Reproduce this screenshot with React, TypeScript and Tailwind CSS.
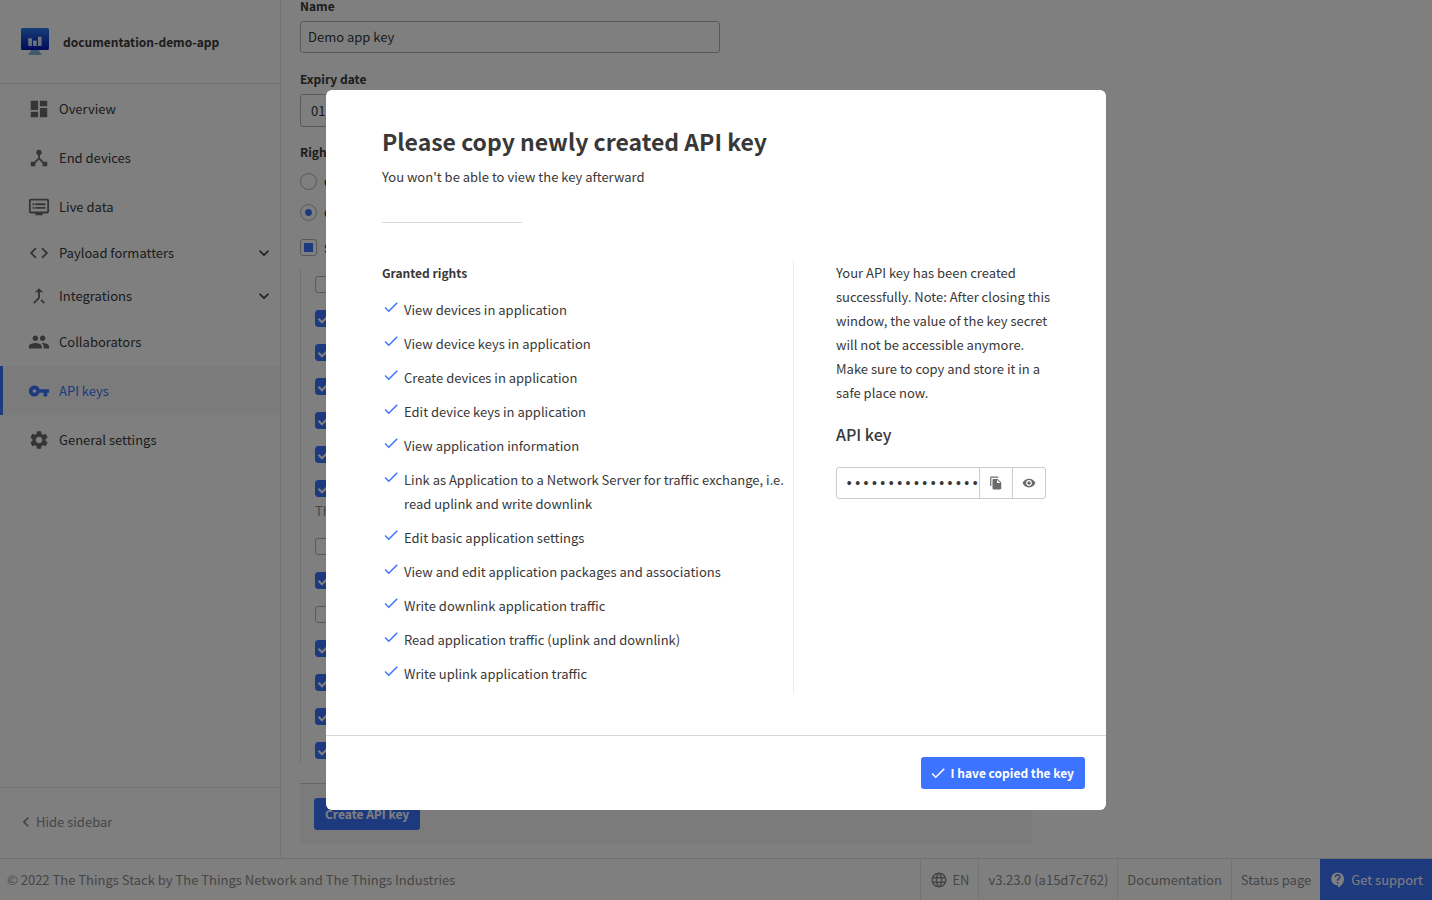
import React from 'react'
import type { IconType } from 'react-icons'
import {
  MdCallMerge,
  MdCheck,
  MdCode,
  MdContactSupport,
  MdDashboard,
  MdDeviceHub,
  MdDvr,
  MdExpandMore,
  MdFileCopy,
  MdKeyboardArrowLeft,
  MdLanguage,
  MdPeople,
  MdRemoveRedEye,
  MdSettings,
  MdVpnKey,
} from 'react-icons/md'

type NavEntry = { label: string; icon: IconType; active?: boolean; expandable?: boolean }

const navEntries: NavEntry[] = [
  { label: 'Overview', icon: MdDashboard },
  { label: 'End devices', icon: MdDeviceHub },
  { label: 'Live data', icon: MdDvr },
  { label: 'Payload formatters', icon: MdCode, expandable: true },
  { label: 'Integrations', icon: MdCallMerge, expandable: true },
  { label: 'Collaborators', icon: MdPeople },
  { label: 'API keys', icon: MdVpnKey, active: true },
  { label: 'General settings', icon: MdSettings },
]

const rights: { label: string; checked: boolean; note?: string }[] = [
  { label: 'Delete application', checked: false },
  { label: 'View devices in application', checked: true },
  { label: 'View device keys in application', checked: true },
  { label: 'Create devices in application', checked: true },
  { label: 'Edit device keys in application', checked: true },
  { label: 'View application information', checked: true },
  {
    label: 'Link as Application to a Network Server for traffic exchange',
    checked: true,
    note: 'This implicitly includes the rights to view application information',
  },
  { label: 'View and edit application API keys', checked: false },
  { label: 'Edit basic application settings', checked: true },
  { label: 'View and edit application collaborators', checked: false },
  { label: 'View and edit application packages and associations', checked: true },
  { label: 'Write downlink application traffic', checked: true },
  { label: 'Read application traffic (uplink and downlink)', checked: true },
  { label: 'Write uplink application traffic', checked: true },
]

const grantedRights = [
  'View devices in application',
  'View device keys in application',
  'Create devices in application',
  'Edit device keys in application',
  'View application information',
  'Link as Application to a Network Server for traffic exchange, i.e. read uplink and write downlink',
  'Edit basic application settings',
  'View and edit application packages and associations',
  'Write downlink application traffic',
  'Read application traffic (uplink and downlink)',
  'Write uplink application traffic',
]

function AppLogo() {
  return (
    <svg width="28" height="28" viewBox="0 0 28 28" aria-hidden="true">
      <defs>
        <linearGradient id="screen" x1="0" y1="0" x2="0" y2="1">
          <stop offset="0" stopColor="#2b7bf0" />
          <stop offset="1" stopColor="#0016b0" />
        </linearGradient>
        <linearGradient id="bars" x1="0" y1="0" x2="1" y2="1">
          <stop offset="0" stopColor="#ffffff" />
          <stop offset="1" stopColor="#a9c4f5" />
        </linearGradient>
      </defs>
      <path d="M10 22h8l1 3h.5a1 1 0 0 1 0 2h-11a1 1 0 0 1 0-2H9z" fill="#7fb2dc" />
      <rect width="28" height="22" rx="1.6" fill="url(#screen)" />
      <rect x="7.3" y="10.3" width="3.7" height="7.7" fill="url(#bars)" />
      <rect x="12.1" y="12.6" width="3.7" height="5.4" fill="url(#bars)" />
      <rect x="17" y="8.8" width="3.7" height="9.2" fill="url(#bars)" />
    </svg>
  )
}

function Sidebar() {
  return (
    <aside className="flex w-[281px] shrink-0 flex-col border-r border-[#e8e8e8]">
      <div className="flex h-21 items-center gap-3.5 border-b border-[#e0e0e0] pl-[21px]">
        <AppLogo />
        <span className="text-[12px] font-bold">documentation-demo-app</span>
      </div>
      <nav className="flex-1">
        <ul>
          {navEntries.map(({ label, icon: Icon, active, expandable }) => (
            <li key={label}>
              <a
                href="#"
                className={
                  active
                    ? 'flex h-[49px] items-center gap-[9px] border-l-3 border-[#3d74ff] bg-[#f7f7f7] pr-1.5 pl-[25px] text-[#3d74ff]'
                    : expandable
                      ? 'flex h-[43px] items-center gap-[9px] border-l-3 border-transparent pr-1.5 pl-[25px]'
                      : 'flex h-[49px] items-center gap-[9px] border-l-3 border-transparent pr-1.5 pl-[25px]'
                }
              >
                <Icon size={22} className={active ? '' : 'text-[#6b6b6b]'} />
                <span className="flex-1">{label}</span>
                {expandable && <MdExpandMore size={20} />}
              </a>
            </li>
          ))}
        </ul>
      </nav>
      <button
        type="button"
        className="flex h-[71px] items-center border-t border-[#e8e8e8] pb-0.5 pl-4 text-[#8c8c8c]"
      >
        <MdKeyboardArrowLeft size={20} />
        Hide sidebar
      </button>
    </aside>
  )
}

function RightCheckbox({ label, checked }: { label: string; checked: boolean }) {
  return (
    <label className="flex items-center gap-2">
      <span className="grid">
        <input
          type="checkbox"
          defaultChecked={checked}
          className="col-start-1 row-start-1 size-[17px] appearance-none rounded-[3px] border border-[#b2b2b2] checked:border-[#3d74ff] checked:bg-[#3d74ff]"
        />
        {checked && (
          <svg
            viewBox="0 0 17 17"
            className="pointer-events-none col-start-1 row-start-1 size-[17px]"
            fill="none"
            stroke="white"
            strokeWidth="2"
            aria-hidden="true"
          >
            <path d="M3.5 8.8l3.5 3.5 7-7" />
          </svg>
        )}
      </span>
      <span className="leading-[17px]">{label}</span>
    </label>
  )
}

function KeyForm() {
  return (
    <main className="flex-1 overflow-hidden pl-[19px]">
      <form className="flex max-w-[732px] flex-col">
        <label htmlFor="key-name" className="mb-[9px] text-[12px] leading-3 font-bold">
          Name
        </label>
        <input
          id="key-name"
          defaultValue="Demo app key"
          className="h-8 w-[420px] rounded-[3px] border border-[#b2b2b2] px-[7px] pb-0.5"
        />
        <label htmlFor="key-expiry" className="mt-5 mb-[9px] text-[12px] leading-3 font-bold">
          Expiry date
        </label>
        <input
          id="key-expiry"
          defaultValue="01/01/2023"
          className="h-[33px] w-[180px] rounded-[3px] border border-[#b2b2b2] px-2.5"
        />
        <fieldset className="mt-4 flex flex-col">
          <legend className="mb-[13px] text-[12px] leading-[17px] font-bold">Rights</legend>
          <label className="mb-3.5 flex items-center gap-[7px] text-[12px] leading-[17px] font-bold">
            <input
              type="radio"
              name="grant"
              className="size-[17px] appearance-none rounded-full border border-[#b2b2b2]"
            />
            Grant all current and future rights
          </label>
          <label className="mb-[18px] flex items-center gap-[7px] text-[12px] leading-[17px] font-bold">
            <input
              type="radio"
              name="grant"
              defaultChecked
              className="size-[17px] appearance-none rounded-full border border-[#b2b2b2] bg-[radial-gradient(circle,#3d74ff_3px,transparent_4px)]"
            />
            Grant individual rights
          </label>
          <label className="mb-3.5 flex items-center gap-[7px] text-[12px] leading-[17px] font-bold">
            <input
              type="checkbox"
              className="size-[17px] appearance-none rounded-[3px] border border-[#b2b2b2] bg-[#3d74ff] bg-clip-content p-[3px]"
            />
            Select all
          </label>
          <ul className="flex flex-col gap-[17px] border-l border-[#e0e0e0] pt-1.5 pb-[3px] pl-3.5">
            {rights.map(({ label, checked, note }) => (
              <li key={label}>
                <RightCheckbox label={label} checked={checked} />
                {note && <p className="mt-1 leading-5 text-[#8c8c8c]">{note}</p>}
              </li>
            ))}
          </ul>
        </fieldset>
        <div className="mt-[21px] border-t border-[#cccccc] bg-[#f7f7f7] p-3.5">
          <button
            type="button"
            className="h-8 rounded-[3px] bg-[#3d74ff] px-[11px] text-[12px] font-bold text-white"
          >
            Create API key
          </button>
        </div>
      </form>
    </main>
  )
}

function Footer() {
  return (
    <footer className="flex h-[42px] shrink-0 items-stretch border-t border-[#e0e0e0] text-[#8c8c8c]">
      <p className="flex flex-1 items-center pl-[7px]">
        © 2022 The Things Stack by The Things Network and The Things Industries
      </p>
      <button type="button" className="flex items-center gap-1 border-l border-[#e8e8e8] px-[9px]">
        <MdLanguage size={18} />
        EN
      </button>
      <span className="flex items-center border-l border-[#e8e8e8] px-[9px]">v3.23.0 (a15d7c762)</span>
      <a href="#" className="flex items-center border-l border-[#e8e8e8] px-[9px]">
        Documentation
      </a>
      <a href="#" className="flex items-center border-l border-[#e8e8e8] px-[9px]">
        Status page
      </a>
      <a href="#" className="flex items-center gap-1 bg-[#3d74ff] px-[9px] text-white">
        <MdContactSupport size={18} />
        Get support
      </a>
    </footer>
  )
}

function KeyModal() {
  return (
    <div className="fixed inset-0 flex items-center justify-center bg-black/50">
      <section
        role="dialog"
        aria-modal="true"
        aria-labelledby="modal-title"
        className="flex max-h-[80vh] w-[780px] flex-col rounded-md bg-white"
      >
        <div className="pt-[35px] pr-12 pb-[42px] pl-14">
          <h1 id="modal-title" className="text-[23px] leading-8 font-bold">
            Please copy newly created API key
          </h1>
          <p className="mt-2 leading-6">You won't be able to view the key afterward</p>
          <hr className="mt-[33px] w-35 border-[#d9d9d9]" />
          <div className="mt-[38px] flex">
            <div className="flex w-[412px] flex-col border-r border-[#ebebeb] pb-[7px]">
              <h2 className="text-[12px] leading-6 font-bold">Granted rights</h2>
              <ul className="mt-[13px] flex flex-col gap-2.5">
                {grantedRights.map((right) => (
                  <li key={right} className="flex gap-1">
                    <MdCheck size={18} className="shrink-0 text-[#3d74ff]" />
                    <span className="leading-6">{right}</span>
                  </li>
                ))}
              </ul>
            </div>
            <div className="flex-1 pl-[42px]">
              <p className="leading-6">
                Your API key has been created successfully. Note: After closing this window, the value of the
                key secret will not be accessible anymore. Make sure to copy and store it in a safe place now.
              </p>
              <h2 className="mt-[17px] text-[16px] leading-6 font-medium">
                <label htmlFor="api-key">API key</label>
              </h2>
              <div className="mt-[21px] flex h-8 w-[210px] rounded-[3px] border border-[#cccccc]">
                <input
                  id="api-key"
                  type="password"
                  readOnly
                  defaultValue="NNSXS.DEMOAPPKEY.SECRETVALUE"
                  className="min-w-0 flex-1 pt-0.5 pl-2 font-['Liberation_Mono',monospace] text-[14px]"
                />
                <button
                  type="button"
                  aria-label="Copy to clipboard"
                  className="flex w-[33px] items-center justify-center border-l border-[#cccccc] text-[#6b6b6b]"
                >
                  <MdFileCopy size={14} />
                </button>
                <button
                  type="button"
                  aria-label="Show key"
                  className="flex w-[33px] items-center justify-center border-l border-[#cccccc] text-[#6b6b6b]"
                >
                  <MdRemoveRedEye size={14} />
                </button>
              </div>
            </div>
          </div>
        </div>
        <div className="flex justify-end border-t border-[#d9d9d9] p-[21px]">
          <button
            type="button"
            className="flex h-8 items-center gap-1 rounded-[3px] bg-[#3d74ff] pr-[11px] pl-2 text-[12px] font-bold text-white"
          >
            <MdCheck size={18} />I have copied the key
          </button>
        </div>
      </section>
    </div>
  )
}

export default function App() {
  return (
    <div className="flex h-screen flex-col bg-white font-['Noto_Sans_CJK_SC',sans-serif] text-[13px] text-[#383838]">
      <div className="flex min-h-0 flex-1">
        <Sidebar />
        <KeyForm />
      </div>
      <Footer />
      <KeyModal />
    </div>
  )
}
